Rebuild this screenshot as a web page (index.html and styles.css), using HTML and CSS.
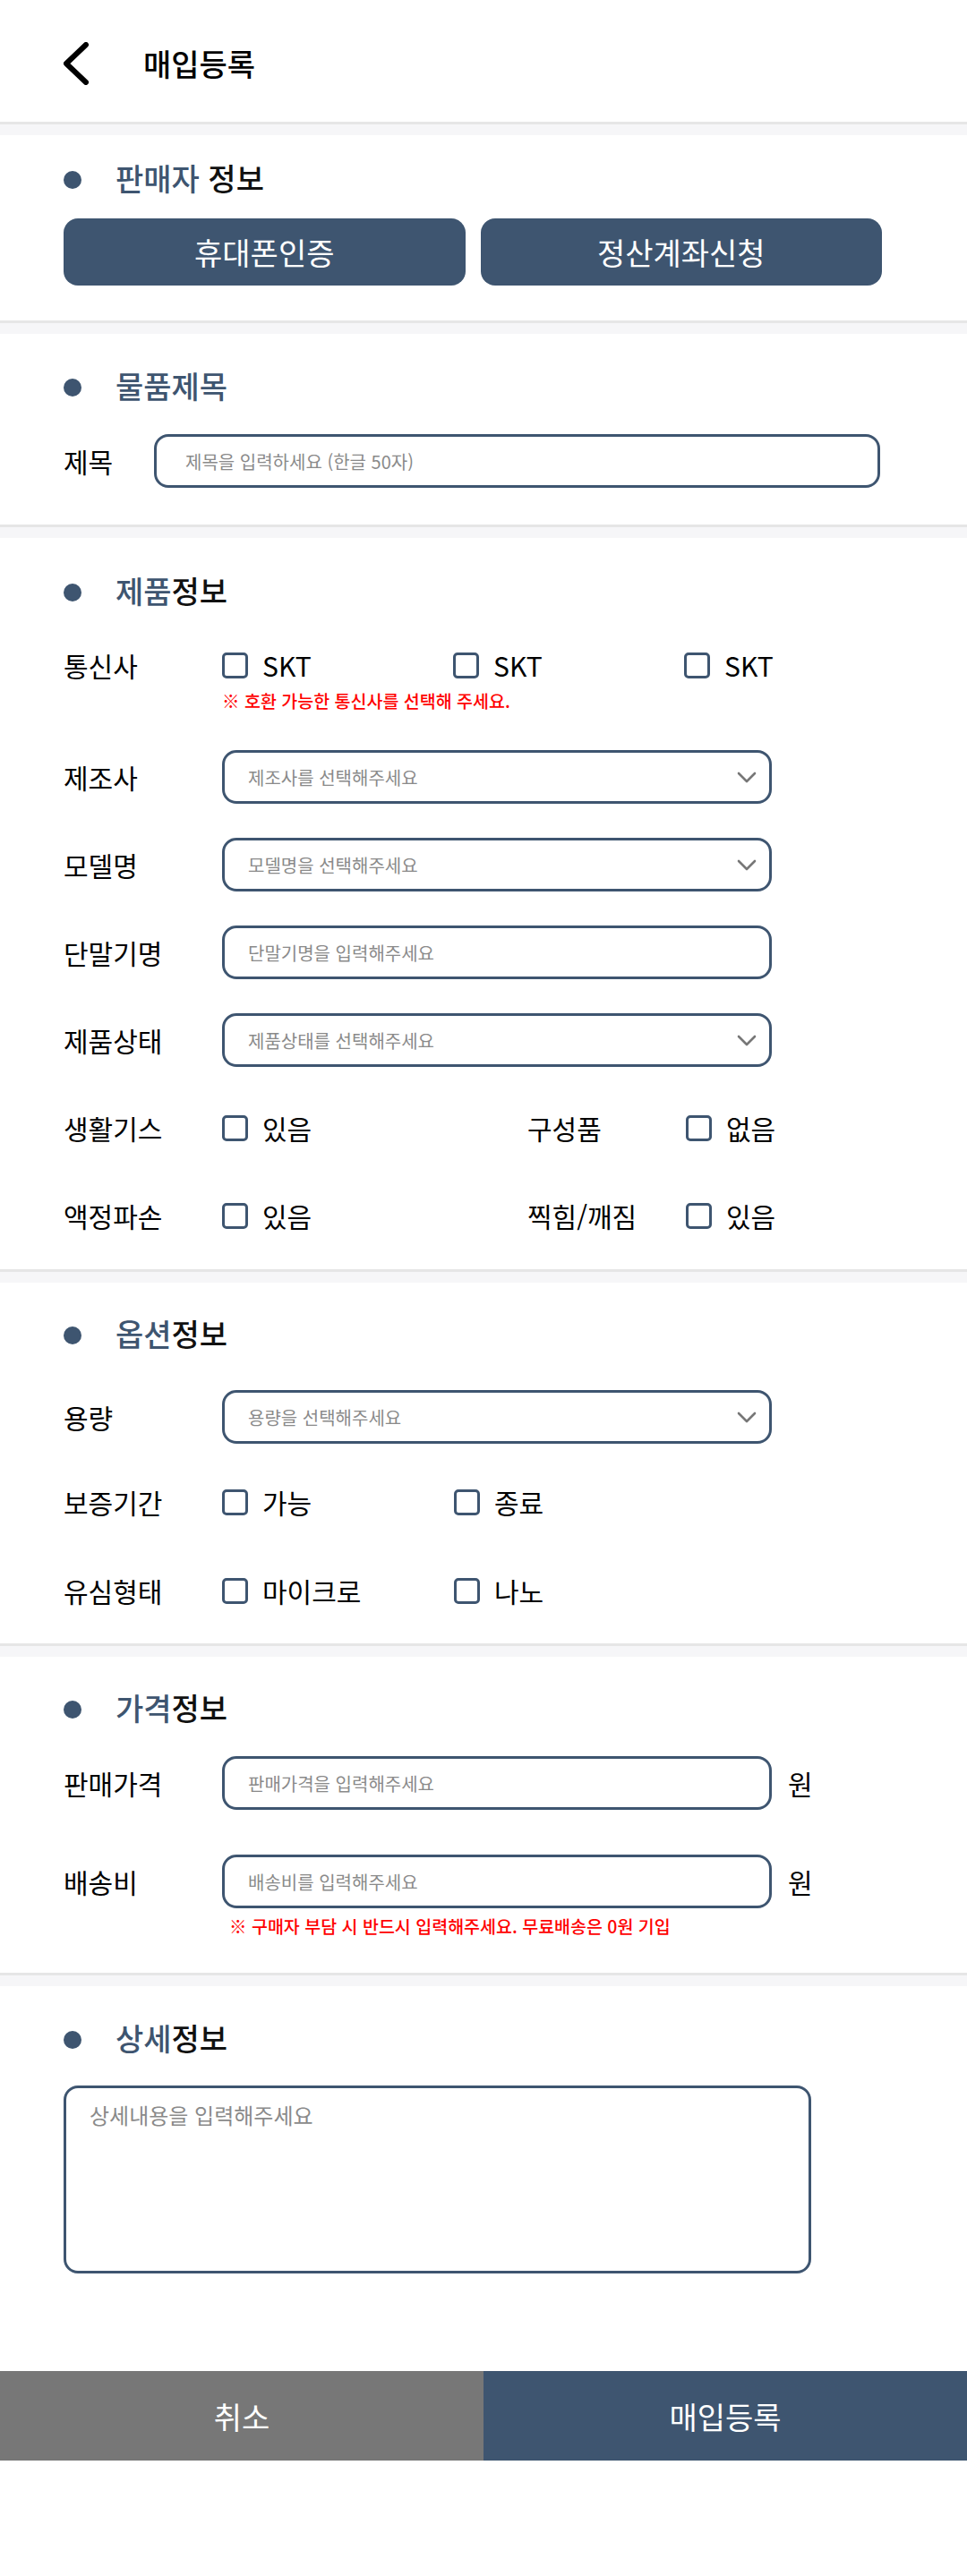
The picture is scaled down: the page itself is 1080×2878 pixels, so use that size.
FILE: index.html
```html
<!DOCTYPE html>
<html lang="ko">
<head>
<meta charset="utf-8">
<title>매입등록</title>
<link rel="stylesheet" href="styles.css">
</head>
<body>
<div class="page">
  <header class="topbar">
    <span class="back" aria-label="뒤로">
      <svg width="30" height="48" viewBox="0 0 30 48"><path d="M26 3 L4 24 L26 45" fill="none" stroke="#000" stroke-width="6" stroke-linecap="round" stroke-linejoin="round"/></svg>
    </span>
    <h1 class="topbar-title">매입등록</h1>
  </header>

  <section class="panel panel--seller">
    <h2 class="panel-title"><span class="dot"></span><span><span class="accent">판매자</span> 정보</span></h2>
    <div class="btn-row">
      <button class="btn-solid">휴대폰인증</button>
      <button class="btn-solid">정산계좌신청</button>
    </div>
  </section>

  <section class="panel panel--subject">
    <h2 class="panel-title"><span class="dot"></span><span class="accent">물품제목</span></h2>
    <div class="field field--subject">
      <span class="field-label field-label--short">제목</span>
      <input class="input input--wide input--subject" type="text" placeholder="제목을 입력하세요 (한글 50자)">
    </div>
  </section>

  <section class="panel panel--product">
    <h2 class="panel-title"><span class="dot"></span><span><span class="accent">제품</span>정보</span></h2>
    <div class="field field--carrier">
      <span class="field-label">통신사</span>
      <div class="options options--three">
        <label class="check"><span class="box"></span>SKT</label>
        <label class="check"><span class="box"></span>SKT</label>
        <label class="check"><span class="box"></span>SKT</label>
      </div>
    </div>
    <p class="note note--carrier">※ 호환 가능한 통신사를 선택해 주세요.</p>
    <div class="field field--first">
      <span class="field-label">제조사</span>
      <div class="select"><span class="select-text">제조사를 선택해주세요</span><svg class="chev" width="22" height="13" viewBox="0 0 22 13"><polyline points="2,2 11,11 20,2" fill="none" stroke="#777" stroke-width="2.6" stroke-linecap="round" stroke-linejoin="round"/></svg></div>
    </div>
    <div class="field">
      <span class="field-label">모델명</span>
      <div class="select"><span class="select-text">모델명을 선택해주세요</span><svg class="chev" width="22" height="13" viewBox="0 0 22 13"><polyline points="2,2 11,11 20,2" fill="none" stroke="#777" stroke-width="2.6" stroke-linecap="round" stroke-linejoin="round"/></svg></div>
    </div>
    <div class="field">
      <span class="field-label">단말기명</span>
      <input class="input" type="text" placeholder="단말기명을 입력해주세요">
    </div>
    <div class="field">
      <span class="field-label">제품상태</span>
      <div class="select"><span class="select-text">제품상태를 선택해주세요</span><svg class="chev" width="22" height="13" viewBox="0 0 22 13"><polyline points="2,2 11,11 20,2" fill="none" stroke="#777" stroke-width="2.6" stroke-linecap="round" stroke-linejoin="round"/></svg></div>
    </div>
    <div class="field">
      <span class="field-label">생활기스</span>
      <label class="check check--half"><span class="box"></span>있음</label>
      <span class="field-label">구성품</span>
      <label class="check"><span class="box"></span>없음</label>
    </div>
    <div class="field">
      <span class="field-label">액정파손</span>
      <label class="check check--half"><span class="box"></span>있음</label>
      <span class="field-label">찍힘/깨짐</span>
      <label class="check"><span class="box"></span>있음</label>
    </div>
  </section>

  <section class="panel panel--option">
    <h2 class="panel-title"><span class="dot"></span><span><span class="accent">옵션</span>정보</span></h2>
    <div class="field field--capacity">
      <span class="field-label">용량</span>
      <div class="select"><span class="select-text">용량을 선택해주세요</span><svg class="chev" width="22" height="13" viewBox="0 0 22 13"><polyline points="2,2 11,11 20,2" fill="none" stroke="#777" stroke-width="2.6" stroke-linecap="round" stroke-linejoin="round"/></svg></div>
    </div>
    <div class="field field--warranty">
      <span class="field-label">보증기간</span>
      <div class="options options--two">
        <label class="check"><span class="box"></span>가능</label>
        <label class="check"><span class="box"></span>종료</label>
      </div>
    </div>
    <div class="field field--usim">
      <span class="field-label">유심형태</span>
      <div class="options options--two">
        <label class="check"><span class="box"></span>마이크로</label>
        <label class="check"><span class="box"></span>나노</label>
      </div>
    </div>
  </section>

  <section class="panel panel--price">
    <h2 class="panel-title"><span class="dot"></span><span><span class="accent">가격</span>정보</span></h2>
    <div class="field field--subject">
      <span class="field-label">판매가격</span>
      <input class="input" type="text" placeholder="판매가격을 입력해주세요">
      <span class="unit">원</span>
    </div>
    <div class="field field--shipping">
      <span class="field-label">배송비</span>
      <input class="input" type="text" placeholder="배송비를 입력해주세요">
      <span class="unit">원</span>
    </div>
    <p class="note note--shipping">※ 구매자 부담 시 반드시 입력해주세요. 무료배송은 0원 기입</p>
  </section>

  <section class="panel panel--detail">
    <h2 class="panel-title"><span class="dot"></span><span><span class="accent">상세</span>정보</span></h2>
    <textarea class="detail" placeholder="상세내용을 입력해주세요"></textarea>
  </section>
</div>

<footer class="actions">
  <button class="act act--cancel">취소</button>
  <button class="act act--submit">매입등록</button>
</footer>
</body>
</html>
```

FILE: styles.css
```css
* { box-sizing: border-box; }

body {
  margin: 0;
  background: #ffffff;
  font-family: "Noto Sans CJK KR", "Noto Sans", sans-serif;
  color: #111111;
}

.page {
  background: #f6f6f8;
}

.topbar {
  height: 139px;
  padding: 6px 0 0 70px;
  display: flex;
  align-items: center;
  background: #ffffff;
  border-bottom: 3px solid #e6e6e6;
  margin-bottom: 12px;
}

.back {
  display: flex;
  width: 30px;
  height: 48px;
}

.topbar-title {
  margin: 0 0 0 60px;
  font-size: 34px;
  font-weight: 500;
  color: #000000;
  line-height: 46px;
}

.panel {
  background: #ffffff;
  border-bottom: 3px solid #e6e6e6;
  margin-bottom: 12px;
  padding: 35px 95px 0 71px;
}

.panel--seller { padding-top: 25px; padding-bottom: 39px; }
.panel--subject { padding-bottom: 41px; }
.panel--product { padding-top: 36px; padding-bottom: 30px; }
.panel--option { padding-top: 34px; padding-bottom: 29px; }
.panel--price { padding-top: 34px; padding-bottom: 40px; }
.panel--detail {
  border-bottom: none;
  margin-bottom: 0;
  padding-bottom: 109px;
}

.panel-title {
  display: flex;
  align-items: center;
  gap: 38px;
  margin: 0;
  height: 46px;
  font-size: 34px;
  line-height: 46px;
  font-weight: 500;
  color: #111111;
}

.dot {
  width: 20px;
  height: 20px;
  border-radius: 50%;
  background: #3e5570;
  margin-top: 3px;
  flex: none;
}

.accent { color: #3e5570; }

.btn-row {
  display: flex;
  gap: 17px;
  margin-top: 22px;
}

.btn-solid {
  flex: 1;
  height: 75px;
  border: none;
  border-radius: 16px;
  background: #3e5570;
  color: #ffffff;
  font-family: inherit;
  font-size: 34px;
  font-weight: 400;
}

.field {
  display: flex;
  align-items: center;
  height: 60px;
  margin-top: 38px;
}

.field--subject { margin-top: 31px; }
.field--first { margin-top: 43px; }
.field--capacity { margin-top: 40px; }
.field--warranty { margin-top: 35px; }
.field--usim { margin-top: 39px; }
.field--shipping { margin-top: 50px; }

.field--carrier {
  height: 40px;
  margin-top: 40px;
}

.field-label {
  width: 177px;
  flex: none;
  font-size: 30px;
  font-weight: 400;
  color: #000000;
}

.field-label--short { width: 101px; }

.input,
.select {
  width: 614px;
  height: 60px;
  border: 3px solid #3e5570;
  border-radius: 16px;
  background: #ffffff;
  font-family: inherit;
  font-size: 20px;
  color: #333333;
  padding: 0 14px 0 26px;
  outline: none;
}

.input--subject {
  width: 811px;
  padding-left: 32px;
}

.input::placeholder { color: #8a8a8a; }

.select {
  display: flex;
  align-items: center;
  justify-content: space-between;
}

.select-text { color: #8a8a8a; }

.chev { flex: none; }

.unit {
  margin-left: 18px;
  font-size: 30px;
  font-weight: 400;
  color: #000000;
}

.options {
  display: grid;
  align-items: center;
}

.options--three { grid-template-columns: repeat(3, 258px); }
.options--two { grid-template-columns: repeat(2, 259px); }

.check {
  display: flex;
  align-items: center;
  gap: 16px;
  font-size: 30px;
  font-weight: 400;
  color: #000000;
}

.check--half { width: 341px; flex: none; }

.box {
  width: 29px;
  height: 29px;
  border: 3px solid #3e5570;
  border-radius: 5px;
  flex: none;
}

.note {
  margin: 0;
  font-size: 19.5px;
  line-height: 24px;
  font-weight: 500;
  color: #ff0000;
}

.note--carrier { margin: 8px 0 0 177px; }
.note--shipping { margin: 8px 0 0 185px; }

.detail {
  display: block;
  width: 835px;
  height: 210px;
  margin-top: 30px;
  border: 3px solid #3e5570;
  border-radius: 16px;
  padding: 12px 26px;
  font-family: inherit;
  font-size: 24px;
  line-height: 35px;
  resize: none;
  outline: none;
}

.detail::placeholder { color: #8a8a8a; }

.actions {
  display: flex;
  height: 100px;
}

.act {
  flex: 1;
  border: none;
  color: #ffffff;
  font-family: inherit;
  font-size: 34px;
  font-weight: 400;
}

.act--cancel { background: #777777; }
.act--submit { background: #3e5570; }
```
